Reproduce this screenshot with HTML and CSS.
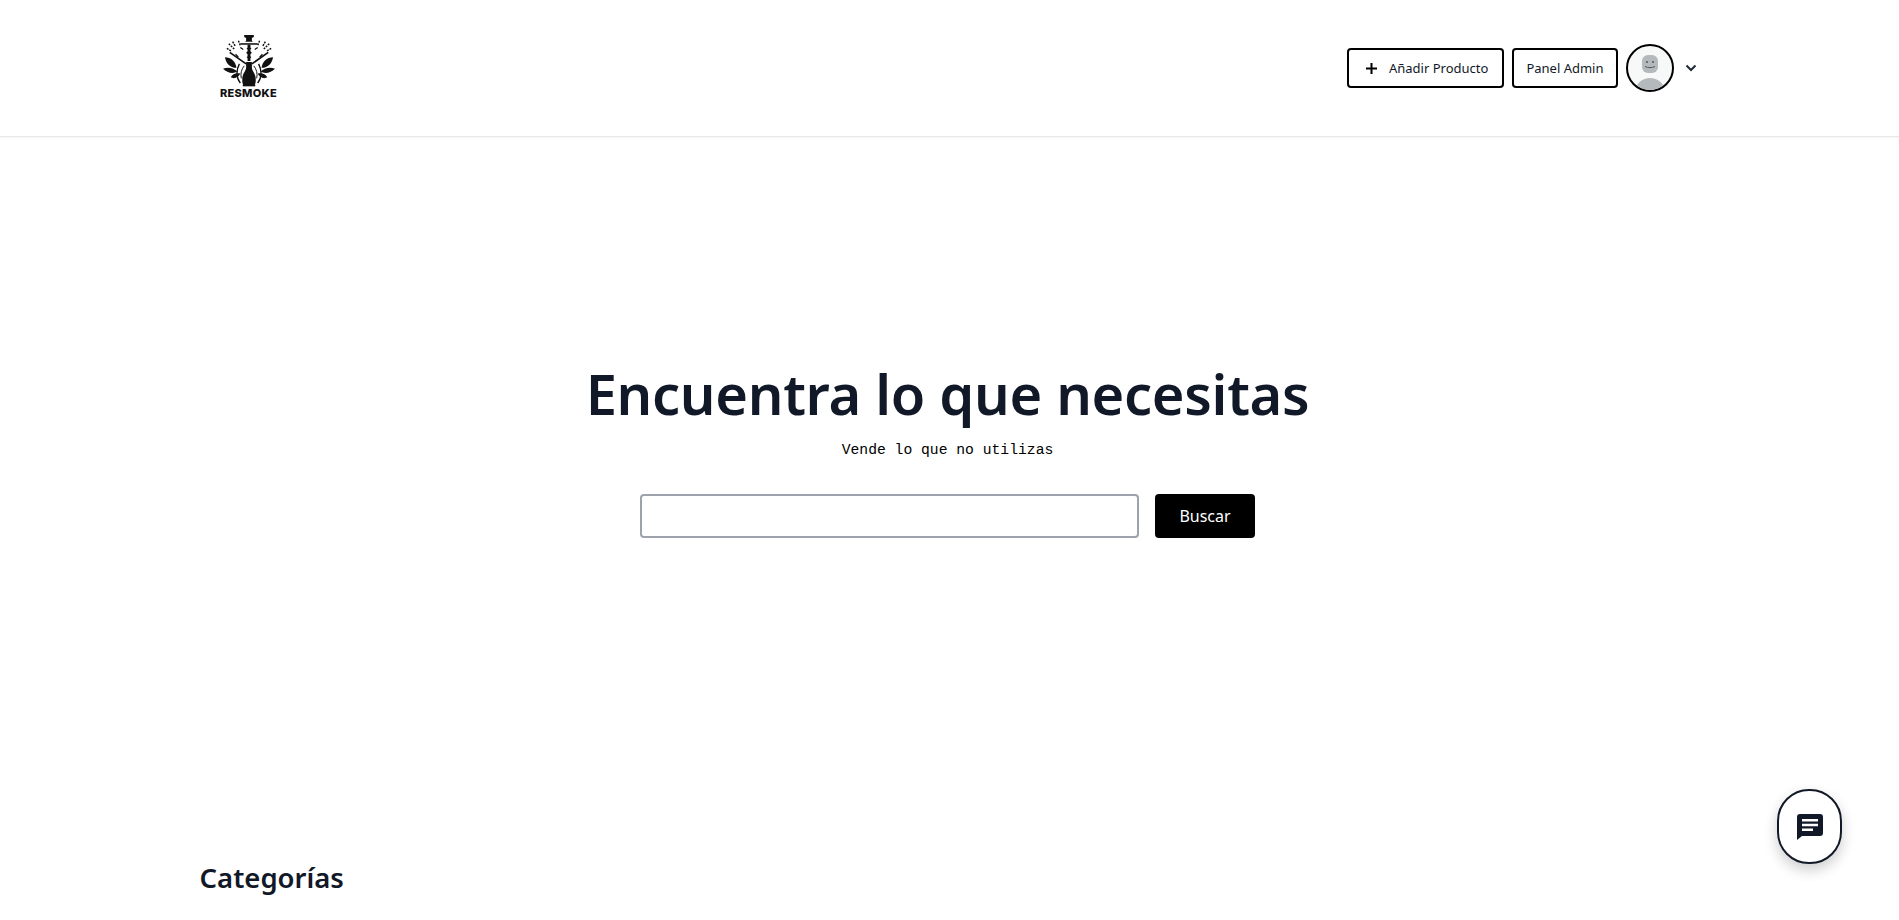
FILE: index.html
```html
<!DOCTYPE html>
<html lang="es">
    <head>
        <meta charset="UTF-8">
        <title>Resmoke</title>
        <link rel="stylesheet" href="styles.css">
    </head>
    <body>

        <header class="topbar">
            <div class="topbar-inner">
                <a class="logo" href="#">
                    <svg class="logo-mark" viewBox="0 0 56 54" width="54" height="52">
                        <!-- bowl and tray -->
                        <path d="M23 0h10v2l-2 1v3l1 1h-8l1-1V3l-2-1z" fill="#111"/>
                        <path d="M19 8.500h18v1.600H19z" fill="#111"/>
                        <!-- stem -->
                        <path d="M26.500 10h3v3l1 1-1 1v2l1.500 1.500-1.500 1.500v2l1 1-1 1v3h-3v-3l-1-1 1-1v-2L25 18.500l1.500-1.500v-2l-1-1 1-1z" fill="#111"/>
                        <!-- bottle -->
                        <path d="M25 28h6v6c0 3 4 6 4 12 0 2 0 4-1 6H22c-1-2-1-4-1-6 0-6 4-9 4-12z" fill="#111"/>
                        <path d="M21.500 52.500h13" stroke="#111" stroke-width="1.600"/>
                        <!-- hoses -->
                        <path d="M25 30 8 18M31 30l17-12" stroke="#111" stroke-width="1.800" fill="none"/>
                        <path d="M19 50c-5-7-4-14-1-20M37 50c5-7 4-14 1-20" stroke="#111" stroke-width="1.400" fill="none"/>
                        <path d="M23 32c-3 4-4 8-3 13M33 32c3 4 4 8 3 13" stroke="#111" stroke-width="1" fill="none"/>
                        <!-- sprigs -->
                        <path d="M7 9l6 6M11 7l3 5M17 6l2 5M5 14l5 3M49 9l-6 6M45 7l-3 5M39 6l-2 5M51 14l-5 3" stroke="#111" stroke-width="1.500" stroke-dasharray="2 1" fill="none"/>
                        <path d="M19 13l3 2M37 13l-3 2M14 20l3 3M42 20l-3 3" stroke="#111" stroke-width="1.300" fill="none"/>
                        <!-- left leaves -->
                        <path d="M3 23c6 0 11 4 12 11-7 0-11-5-12-11z" fill="#111"/>
                        <path d="M1 35c5-2 11-1 15 3-5 3-11 1-15-3z" fill="#111"/>
                        <path d="M9 44c2-4 6-5 10-4-2 4-6 6-10 4z" fill="#111"/>
                        <!-- right leaves -->
                        <path d="M53 23c-6 0-11 4-12 11 7 0 11-5 12-11z" fill="#111"/>
                        <path d="M55 35c-5-2-11-1-15 3 5 3 11 1 15-3z" fill="#111"/>
                        <path d="M47 44c-2-4-6-5-10-4 2 4 6 6 10 4z" fill="#111"/>
                    </svg>
                    <span class="logo-text">RESMOKE</span>
                </a>
                <nav class="actions">
                    <button class="btn-outline btn-add">
                        <svg viewBox="0 0 11 11" width="11" height="11"><path d="M5.500 0v11M0 5.500h11" stroke="#000" stroke-width="2"/></svg>
                        <span>Añadir Producto</span>
                    </button>
                    <button class="btn-outline">Panel Admin</button>
                    <div class="avatar">
                        <svg viewBox="0 0 44 44" width="44" height="44">
                            <rect x="14" y="9" width="16" height="18" rx="6" fill="#b4b9bd"/>
                            <circle cx="19" cy="16" r="1" fill="#555"/>
                            <circle cx="25" cy="16" r="1" fill="#555"/>
                            <path d="M17 20.500c3 1.500 7 1.500 10 0" stroke="#555" stroke-width="1" fill="none"/>
                            <ellipse cx="22" cy="44" rx="14" ry="12" fill="#b4b9bd"/>
                        </svg>
                    </div>
                    <svg class="chevron" viewBox="0 0 12 8" width="12" height="8"><path d="M1.500 1.500 6 6l4.500-4.500" stroke="#1f2937" stroke-width="2" fill="none"/></svg>
                </nav>
            </div>
        </header>

        <section class="hero">
            <h1>Encuentra lo que necesitas</h1>
            <p class="tagline">Vende lo que no utilizas</p>
            <form class="search">
                <input type="text" class="search-input">
                <button type="button" class="search-btn">Buscar</button>
            </form>
        </section>

        <section class="categories">
            <h2>Categorías</h2>
        </section>

        <button class="chat-btn">
            <svg viewBox="0 0 26 26" width="26" height="26">
                <path d="M3 0h20a3 3 0 0 1 3 3v16a3 3 0 0 1-3 3H5l-5 4V3a3 3 0 0 1 3-3z" fill="#111827"/>
                <path d="M5 5h16v2.400H5zM5 9.800h16v2.400H5zM5 14.600h11V17H5z" fill="#fff"/>
            </svg>
        </button>

    </body>
</html>
```

FILE: styles.css
```css
html, body {
    margin: 0;
    height: 100%;
    overflow: hidden;
}
body {
    font-family: 'Noto Sans', 'Open Sans', sans-serif;
    background: #fff;
    color: #111827;
}
.topbar {
    height: 136px;
    border-bottom: 1px solid #e8e8e8;
    box-shadow: 0 1px 2px rgba(0, 0, 0, 0.05);
}
.topbar-inner {
    max-width: 1536px;
    height: 100%;
    margin: 0 auto;
    padding: 0 21px 0 38px;
    box-sizing: border-box;
    display: flex;
    align-items: center;
    justify-content: space-between;
}
.logo {
    display: flex;
    flex-direction: column;
    align-items: center;
    width: 58px;
    margin-top: -4px;
    color: #111;
    text-decoration: none;
}
.logo-text {
    font-family: 'Inter', sans-serif;
    font-size: 11px;
    font-weight: 800;
    line-height: 10px;
    margin-top: 1px;
    letter-spacing: 0.3px;
}
.actions {
    display: flex;
    align-items: center;
    gap: 8px;
}
.btn-outline {
    height: 40px;
    padding: 0 12px;
    background: #fff;
    border: 2px solid #000;
    border-radius: 4px;
    font-family: inherit;
    font-size: 13px;
    color: #111827;
    display: flex;
    align-items: center;
    gap: 12px;
}
.btn-add {
    padding: 0 14px 0 17px;
}
.avatar {
    width: 48px;
    height: 48px;
    box-sizing: border-box;
    border: 2px solid #000;
    border-radius: 50%;
    background: #f7f8f8;
    overflow: hidden;
}
.avatar svg {
    display: block;
}
.chevron {
    margin-left: 3px;
}
.hero {
    padding-top: 222px;
    padding-right: 4px;
    text-align: center;
}
.hero h1 {
    margin: 0;
    font-size: 56px;
    font-weight: 600;
    line-height: 68px;
    letter-spacing: -0.3px;
    color: #111827;
}
.tagline {
    margin: 13px 0 0;
    font-family: 'Liberation Mono', monospace;
    font-size: 14.7px;
    line-height: 20px;
    color: #000;
}
.search {
    margin-top: 34px;
    display: flex;
    justify-content: center;
    gap: 16px;
}
.search-input {
    width: 499px;
    height: 44px;
    box-sizing: border-box;
    border: 2px solid #9ca3af;
    border-radius: 4px;
    background: #fff;
}
.search-btn {
    width: 100px;
    height: 44px;
    background: #000;
    color: #fff;
    border: none;
    border-radius: 4px;
    font-family: inherit;
    font-size: 16px;
}
.categories {
    max-width: 1536px;
    margin: 322px auto 0;
    padding: 0 18px;
    box-sizing: border-box;
}
.categories h2 {
    margin: 0;
    font-size: 27.500px;
    font-weight: 600;
    line-height: 36px;
}
.chat-btn {
    position: fixed;
    left: 1777px;
    top: 789px;
    width: 65px;
    height: 75px;
    padding: 0;
    background: #fff;
    border: 2px solid #111827;
    border-radius: 32px;
    box-shadow: 0 6px 14px rgba(0, 0, 0, 0.2);
    display: flex;
    align-items: center;
    justify-content: center;
}
```
